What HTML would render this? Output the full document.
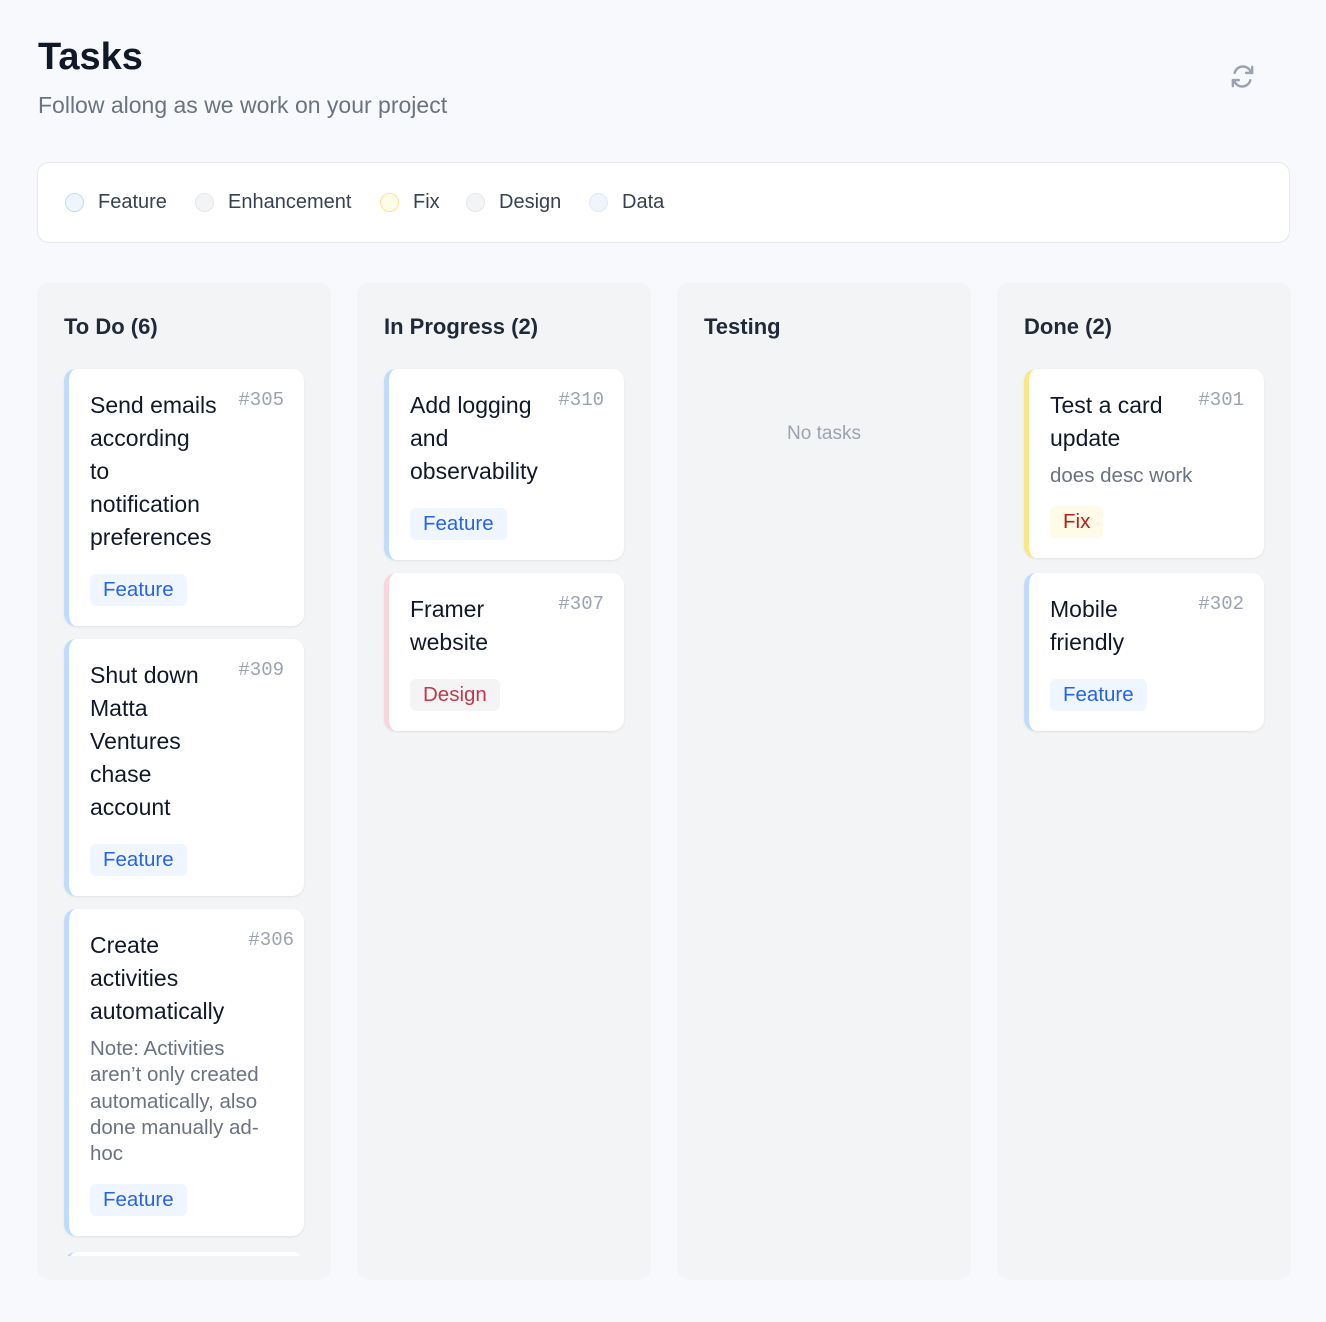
<!DOCTYPE html>
<html><head><meta charset="utf-8"><style>
*{box-sizing:border-box;margin:0;padding:0}
body{width:1326px;height:1322px;background:#f7f9fc;font-family:"Liberation Sans",sans-serif;position:relative;overflow:hidden;color:#111827}
.abs{position:absolute}
h1{position:absolute;left:38px;top:36px;font-size:38px;font-weight:bold;color:#111827}
.sub{left:38px;top:92px;font-size:23px;color:#6b7280}
.filters{left:37px;top:162px;width:1253px;height:81px;background:#fff;border:1px solid #e5e7eb;border-radius:12px}
.fi{position:absolute;top:28px;display:flex;align-items:center;font-size:20px;color:#374151}
.dot{width:19px;height:19px;border-radius:50%;margin-right:14px;border:1px solid}
.col{top:283px;width:294px;height:997px;background:#f3f4f6;border-radius:12px;overflow:hidden}
.ch{position:absolute;left:27px;top:31px;font-size:22px;font-weight:bold;color:#1f2937}
.card{position:absolute;left:27px;width:240px;background:#fff;border-radius:12px;border-left:5px solid #bfdbfe;box-shadow:0 1px 2px rgba(0,0,0,.08);padding:20px 20px 20px 21px}
.t{font-size:23px;line-height:33px;color:#111827}
.id{position:absolute;top:20px;right:20px;font-family:"Liberation Mono",monospace;font-size:19px;color:#9ca3af}
.d{font-size:20.5px;line-height:26.3px;color:#6b7280;margin-top:8px}
.d + .tag{margin-top:17px}
.tag{display:inline-block;margin-top:20px;height:32px;line-height:32px;padding:0 13px;border-radius:6px;font-size:20.5px;background:#eff6ff;color:#2563eb;vertical-align:top}
.clip{position:absolute;left:0;top:0;width:294px;height:973px;overflow:hidden}
</style></head><body>
<h1>Tasks</h1>
<div class="abs sub">Follow along as we work on your project</div>
<svg class="abs" style="left:1228px;top:62px" width="29" height="29" viewBox="0 0 24 24" fill="none" stroke="#9ca3af" stroke-width="2" stroke-linecap="round" stroke-linejoin="round"><path d="M20 4v5h-5"/><path d="M4 20v-5h5"/><path d="M5.5 9a7 7 0 0 1 13-1.5L20 9"/><path d="M18.5 15a7 7 0 0 1-13 1.5L4 15"/></svg>
<div class="abs filters">
<div class="fi" style="left:27px"><span class="dot" style="background:#eff6ff;border-color:#bfdbfe"></span>Feature</div>
<div class="fi" style="left:157px"><span class="dot" style="background:#f3f4f6;border-color:#e5e7eb"></span>Enhancement</div>
<div class="fi" style="left:342px"><span class="dot" style="background:#fefce8;border-color:#fde68a"></span>Fix</div>
<div class="fi" style="left:428px"><span class="dot" style="background:#f3f4f6;border-color:#e5e7eb"></span>Design</div>
<div class="fi" style="left:551px"><span class="dot" style="background:#f1f5f9;border-color:#dbeafe"></span>Data</div>
</div>

<div class="abs col" style="left:37px">
<div class="ch">To Do (6)</div>
<div class="clip">
<div class="card" style="top:86px"><div class="id">#305</div><div class="t">Send emails<br>according<br>to<br>notification<br>preferences</div><span class="tag">Feature</span></div>
<div class="card" style="top:356px"><div class="id">#309</div><div class="t">Shut down<br>Matta<br>Ventures<br>chase<br>account</div><span class="tag">Feature</span></div>
<div class="card" style="top:626px"><div class="id" style="right:10px">#306</div><div class="t">Create<br>activities<br>automatically</div><div class="d">Note: Activities<br>aren’t only created<br>automatically, also<br>done manually ad-<br>hoc</div><span class="tag">Feature</span></div>
<div class="card" style="top:969px;height:100px"></div>
</div>
</div>

<div class="abs col" style="left:357px">
<div class="ch">In Progress (2)</div>
<div class="card" style="top:86px"><div class="id">#310</div><div class="t">Add logging<br>and<br>observability</div><span class="tag">Feature</span></div>
<div class="card" style="top:290px;border-left-color:#fbd5dc"><div class="id">#307</div><div class="t">Framer<br>website</div><span class="tag" style="background:#f4f4f5;color:#be3a4a">Design</span></div>
</div>

<div class="abs col" style="left:677px">
<div class="ch">Testing</div>
<div class="abs" style="left:0;width:294px;top:140px;text-align:center;font-size:19px;color:#9ca3af">No tasks</div>
</div>

<div class="abs col" style="left:997px">
<div class="ch">Done (2)</div>
<div class="card" style="top:86px;border-left-color:#fde68a"><div class="id">#301</div><div class="t">Test a card<br>update</div><div class="d">does desc work</div><span class="tag" style="background:#fefce8;color:#b91c1c">Fix</span></div>
<div class="card" style="top:290px"><div class="id">#302</div><div class="t">Mobile<br>friendly</div><span class="tag">Feature</span></div>
</div>
</body></html>
